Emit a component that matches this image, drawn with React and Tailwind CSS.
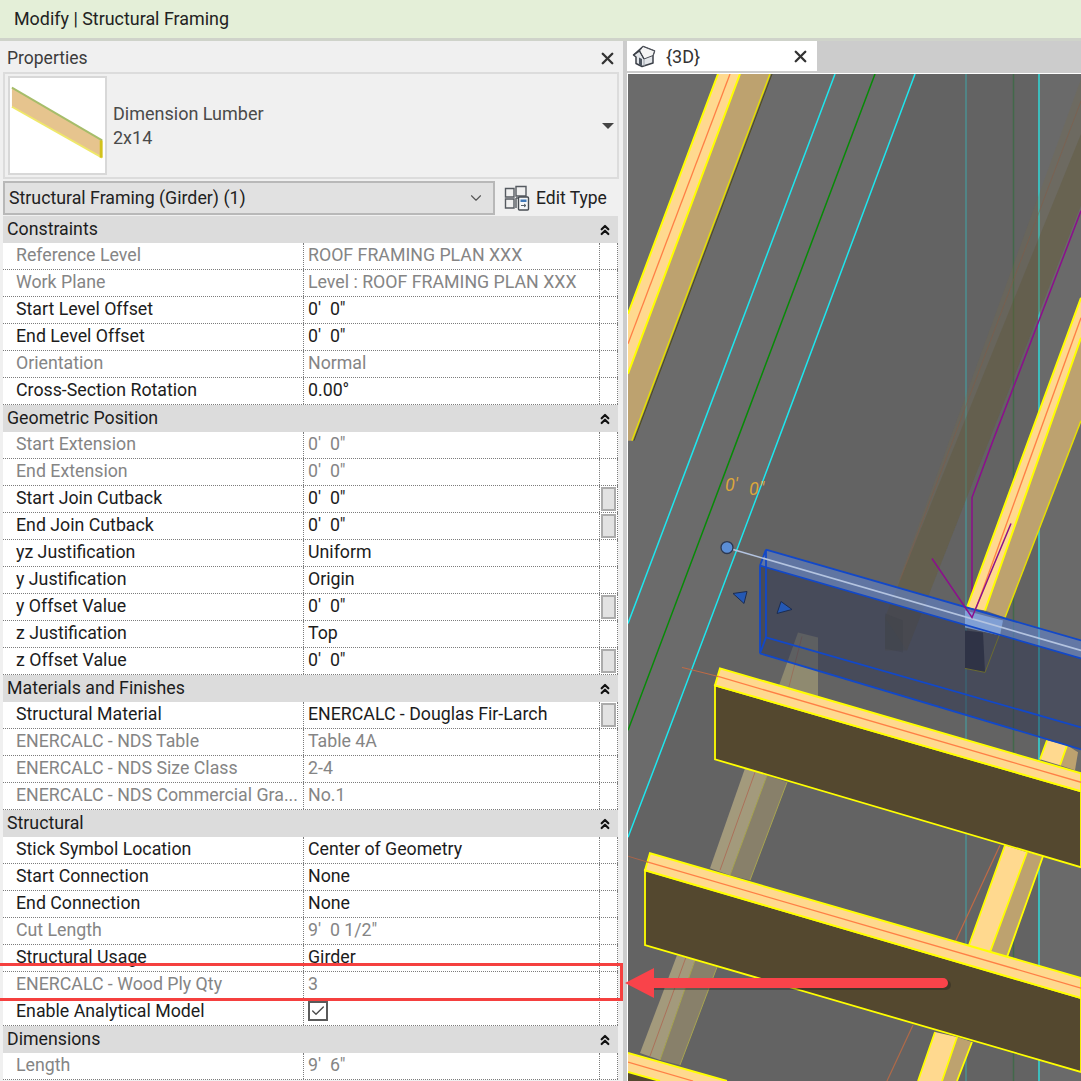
import React from 'react';
import { X, ChevronDown, ChevronsUp, Check } from 'lucide-react';

// property sections, in the order of the panel
const sections = [
  {
    title: 'Constraints',
    rows: [
      { label: 'Reference Level', value: 'ROOF FRAMING PLAN XXX', off: true },
      { label: 'Work Plane', value: 'Level : ROOF FRAMING PLAN XXX', off: true },
      { label: 'Start Level Offset', value: `0'  0"` },
      { label: 'End Level Offset', value: `0'  0"` },
      { label: 'Orientation', value: 'Normal', off: true },
      { label: 'Cross-Section Rotation', value: '0.00°' },
    ],
  },
  {
    title: 'Geometric Position',
    rows: [
      { label: 'Start Extension', value: `0'  0"`, off: true },
      { label: 'End Extension', value: `0'  0"`, off: true },
      { label: 'Start Join Cutback', value: `0'  0"`, btn: true },
      { label: 'End Join Cutback', value: `0'  0"`, btn: true },
      { label: 'yz Justification', value: 'Uniform' },
      { label: 'y Justification', value: 'Origin' },
      { label: 'y Offset Value', value: `0'  0"`, btn: true },
      { label: 'z Justification', value: 'Top' },
      { label: 'z Offset Value', value: `0'  0"`, btn: true },
    ],
  },
  {
    title: 'Materials and Finishes',
    rows: [
      { label: 'Structural Material', value: 'ENERCALC - Douglas Fir-Larch', btn: true },
      { label: 'ENERCALC - NDS Table', value: 'Table 4A', off: true },
      { label: 'ENERCALC - NDS Size Class', value: '2-4', off: true },
      { label: 'ENERCALC - NDS Commercial Gra...', value: 'No.1', off: true },
    ],
  },
  {
    title: 'Structural',
    rows: [
      { label: 'Stick Symbol Location', value: 'Center of Geometry' },
      { label: 'Start Connection', value: 'None' },
      { label: 'End Connection', value: 'None' },
      { label: 'Cut Length', value: `9'  0 1/2"`, off: true },
      { label: 'Structural Usage', value: 'Girder' },
      { label: 'ENERCALC - Wood Ply Qty', value: '3', off: true },
      { label: 'Enable Analytical Model', check: true },
    ],
  },
  {
    title: 'Dimensions',
    rows: [{ label: 'Length', value: `9'  6"`, off: true }],
  },
];

const PropRow = ({ row }) => (
  <div className={`flex h-[27px] items-center border-b border-dotted border-[#7c7c7c] bg-white text-[17.75px] ${row.off ? 'text-[#858585]' : 'text-[#1c1c1c]'}`}>
    <div className="flex h-full w-[301px] items-center overflow-hidden whitespace-nowrap border-r border-dotted border-[#7c7c7c] pb-[2px] pl-[13px]">
      {row.label}
    </div>
    <div className="flex h-full w-[296px] items-center whitespace-pre border-r border-dotted border-[#7c7c7c] pb-[2px] pl-[4px]">
      {row.check ? (
        <span className="flex h-[20px] w-[20px] items-center justify-center border-2 border-[#5a5a5a]">
          <Check size={16} strokeWidth={2} className="text-[#4a4a4a]" />
        </span>
      ) : (
        row.value
      )}
    </div>
    <div className="flex h-full w-[18px] items-center justify-center border-r border-dotted border-[#7c7c7c]">
      {row.btn && <span className="h-[24px] w-[15px] border-2 border-[#ababab] bg-[#e2e2e2]" />}
    </div>
  </div>
);

const Section = ({ section }) => (
  <div>
    <div className="flex h-[27px] items-center justify-between bg-[#dcdcdc] pl-[4px] pr-[5px] text-[17.75px] text-[#1c1c1c]">
      <span>{section.title}</span>
      <ChevronsUp size={16} strokeWidth={3.2} className="text-[#111]" />
    </div>
    {section.rows.map((row) => (
      <PropRow key={row.label} row={row} />
    ))}
  </div>
);

const HouseIcon = () => (
  <svg width="24" height="24" viewBox="0 0 24 24" className="shrink-0">
    <path d="M1.5 11 L11 2.5 L22.5 7 L21 11.5 L21 19 L10 22.5 L4 19.5 L4 13 Z" fill="#e3e6ea" stroke="#3c4048" strokeWidth="1.5" strokeLinejoin="round" />
    <path d="M11 2.5 L22.5 7 L21 11.5 L12 15 L7.5 7 Z" fill="#f4f4f4" stroke="#4c5058" strokeWidth="1" />
    <path d="M1.5 11 L7.5 7 L12 15" fill="none" stroke="#3c4048" strokeWidth="1.3" />
    <path d="M7 13.5 L10 15 L10 22 L7 20.5 Z" fill="#4d5560" />
    <path d="M12 15 V22" stroke="#9aa0a8" strokeWidth="1" />
  </svg>
);

const EditTypeIcon = () => (
  <svg width="26" height="26" viewBox="0 0 26 26" className="shrink-0">
    <path d="M1.5 3.5 H10 V12 H1.5 Z M12 1.5 H22 V11 H12 Z M1.5 14 H10 V23 H1.5 Z M12 13 H15 M12 13 V23" fill="none" stroke="#555a60" strokeWidth="1.4" />
    <rect x="14.5" y="12" width="10" height="13" rx="1" fill="#f4f6f8" stroke="#474c52" strokeWidth="1.4" />
    <rect x="16.5" y="14.5" width="6" height="2.5" fill="#3f78b8" />
    <path d="M17 20.5 H22 M20 19 L22 20.5 L20 22" fill="none" stroke="#55606a" strokeWidth="1" />
  </svg>
);

const Scene = () => (
  <svg viewBox="628 73 453 1008" preserveAspectRatio="none" className="h-full w-full">
    <rect x="628" y="73" width="453" height="1008" fill="#636363" />
    <polygon points="628,73 915,73 628,837" fill="#6b6b6b" />
    <polygon points="1039,73 1081,73 1081,1081 1039,1081" fill="#6a6a6a" />

    {/* vertical lines */}
    <path d="M966 73V1081" stroke="#4b8f91" strokeWidth="1.5" />
    <path d="M1013.5 73V1081" stroke="#42694a" strokeWidth="1.5" />
    <path d="M1039 73V1081" stroke="#2fd9d9" strokeWidth="1.5" />

    {/* ghost beam behind */}
    <polygon points="1081,78 1081,205 907,650 885,617" fill="#7b7040" fillOpacity="0.2" />
    <polygon points="1081,133 1081,205 907,650 885,650 885,617" fill="#5c5230" fillOpacity="0.3" />
    <path d="M1081 100 L900 580" stroke="#8a5a40" strokeOpacity="0.45" strokeWidth="1" fill="none" />

    {/* slanted lines */}
    <path d="M835 73 L697 440 L628 623" stroke="#1ee6ee" strokeWidth="1.5" fill="none" />
    <path d="M875 73 L737 440 L628 730" stroke="#078a07" strokeWidth="1.5" fill="none" />
    <path d="M915 73 L778 440 L665 740 L628 837" stroke="#1ee6ee" strokeWidth="1.5" fill="none" />
    <path d="M1081 210 L993 440 L972 497 V617" stroke="#8c0f8c" strokeWidth="1.5" fill="none" />

    {/* top left joist */}
    <polygon points="770,73 740,73 628,373 628,440 632,440" fill="#bda26f" />
    <polygon points="718,73 740,73 628,373 628,313" fill="#ffd98f" />
    <path d="M718 73 L628 313 M740 73 L628 373" stroke="#ffff00" strokeWidth="2" fill="none" />
    <path d="M770 73 L632 440" stroke="#e6e000" strokeWidth="1.5" fill="none" />
    <path d="M772 73 L634 440" stroke="#4f4a1c" strokeWidth="1" fill="none" />
    <path d="M730 73 L628 343" stroke="#ff7f45" strokeWidth="1.3" fill="none" />

    {/* right joist */}
    <polygon points="1081,420 1081,337 985,610 1005,617" fill="#bda26f" />
    <polygon points="1081,297 1081,337 985,610 967,607" fill="#ffd98f" />
    <path d="M1081 297 L967 607 M1081 337 L985 610" stroke="#ffff00" strokeWidth="2" fill="none" />
    <path d="M1081 420 L1005 617" stroke="#e6e000" strokeWidth="1.5" fill="none" />
    <path d="M1081 317 L976 608" stroke="#ff7f45" strokeWidth="1.3" fill="none" />

    {/* posts between the beams */}
    <polygon points="798,632 818,637 818,697 779,685" fill="#8f8a70" />
    <path d="M802 636 L788 690" stroke="#98705a" strokeWidth="1" fill="none" />
    <polygon points="745,768 767,775 730,875 710,868" fill="#a39a7c" />
    <polygon points="767,775 787,782 750,880 730,875" fill="#88806a" />
    <path d="M755 772 L720 870" stroke="#ab7059" strokeWidth="1" fill="none" />
    <path d="M767 775 L730 875 M787 782 L750 880" stroke="#a8a550" strokeWidth="1" fill="none" />
    <polygon points="677,955 695,960 660,1060 640,1053" fill="#a39a7c" />
    <polygon points="695,960 717,967 680,1065 660,1060" fill="#88806a" />
    <path d="M686 957 L650 1056" stroke="#ab7059" strokeWidth="1" fill="none" />
    <path d="M695 960 L660 1060 M717 967 L680 1065" stroke="#a8a550" strokeWidth="1" fill="none" />

    <polygon points="1005,845 1027,852 990,952 969,945" fill="#ffd98f" />
    <polygon points="1027,852 1043,856 1007,957 990,952" fill="#bda26f" />
    <path d="M1005 845 L969 945 M1027 852 L990 952 M1043 856 L1007 957" stroke="#ffff00" strokeWidth="1.8" fill="none" />
    <path d="M1000 845 L955 942" stroke="#c06a45" strokeWidth="1.2" fill="none" />

    <polygon points="935,1032 957,1037 942,1081 918,1081" fill="#ffd98f" />
    <polygon points="957,1037 972,1042 957,1081 942,1081" fill="#bda26f" />
    <path d="M935 1032 L918 1081 M957 1037 L942 1081 M972 1042 L957 1081" stroke="#ffff00" strokeWidth="1.8" fill="none" />
    <path d="M913 1025 L887 1081" stroke="#b06a48" strokeWidth="1.2" fill="none" />

    <polygon points="1047,740 1067,745 1060,765 1040,759" fill="#ffd98f" />
    <polygon points="1067,745 1078,752 1075,770 1060,765" fill="#bda26f" />
    <path d="M1047 740 L1040 759 M1067 745 L1060 765" stroke="#ffff00" strokeWidth="1.8" fill="none" />

    {/* beam 1 */}
    <polygon points="715,685 1081,791 1081,867 715,759" fill="#54482f" stroke="#ffff00" strokeWidth="1.8" />
    <polygon points="720,668 1081,773 1081,791 715,685" fill="#ffd98f" stroke="#ffff00" strokeWidth="2" />
    <path d="M718 676 L1081 782" stroke="#ff7f45" strokeWidth="1.3" fill="none" />
    <path d="M682 667 L718 676" stroke="#c06a45" strokeWidth="1" fill="none" />

    {/* beam 2 */}
    <polygon points="645,870 1081,998 1081,1072 645,945" fill="#54482f" stroke="#ffff00" strokeWidth="1.8" />
    <polygon points="650,853 1081,978 1081,998 645,870" fill="#ffd98f" stroke="#ffff00" strokeWidth="2" />
    <path d="M648 862 L1081 988" stroke="#ff7f45" strokeWidth="1.3" fill="none" />
    <path d="M628 856 L648 862" stroke="#a8644a" strokeWidth="1" fill="none" />

    {/* beam 3 */}
    <polygon points="628,1072 660,1081 628,1081" fill="#54482f" />
    <polygon points="628,1053 727,1081 660,1081 628,1072" fill="#ffd98f" />
    <path d="M628 1053 L727 1081 M628 1072 L660 1081" stroke="#ffff00" strokeWidth="2" fill="none" />
    <path d="M628 1062 L693 1081" stroke="#ff7f45" strokeWidth="1.3" fill="none" />

    {/* selected girder */}
    <polygon points="760,565 1081,658 1081,749 760,653" fill="#2c3452" fillOpacity="0.5" />
    <polygon points="885,613 903,620 903,652 885,648" fill="#3c3f48" fillOpacity="0.3" />
    <polygon points="965,630 983,632 985,672 965,668" fill="#2f3346" />
    <path d="M965 668 L985 672 L1003 625" stroke="#6b6b30" strokeWidth="1" fill="none" />
    <polygon points="766,549 1081,640 1081,658 760,565" fill="#5f80c4" fillOpacity="0.65" />
    <polygon points="965,610 1003,620 1000,635 965,627" fill="#8fb0ea" fillOpacity="0.7" />
    <path d="M766 549 L1081 640 M760 565 L1081 658 M760 653 L1081 749 M766 637 L1081 727 M760 565 V653 M766 549 V637 M766 549 L760 565 M766 637 L760 653" stroke="#1248c8" strokeWidth="1.8" fill="none" />
    <path d="M733 549 L1081 650" stroke="#b4c4e0" strokeWidth="1.6" fill="none" />
    <path d="M932 558 L972 617 L1011 523" stroke="#8c0f8c" strokeWidth="1.5" fill="none" />
    <circle cx="727" cy="547" r="6" fill="#5b8ed6" stroke="#2c3850" strokeWidth="1.3" />
    <polygon points="733,593 747,591 744,603" fill="#2458b4" stroke="#1c2c50" strokeWidth="1" />
    <polygon points="781,601 792,609 777,613" fill="#2458b4" stroke="#1c2c50" strokeWidth="1" />

    <text x="725" y="490" fill="#dba63c" fontSize="18" fontStyle="italic" fontFamily="Roboto, sans-serif">0'</text>
    <text x="749" y="494" fill="#dba63c" fontSize="18" fontStyle="italic" fontFamily="Roboto, sans-serif">0"</text>
  </svg>
);

export default function App() {
  return (
    <div className="relative h-[1081px] w-[1081px] overflow-hidden bg-[#f0f0f0] font-['Roboto','Noto_Sans',sans-serif]">
      <div className="flex h-[41px] items-center border-b-[3px] border-[#cfd3ca] bg-[#e4efd8] pl-[14px] text-[17.9px] text-[#222]">
        Modify | Structural Framing
      </div>

      <div className="flex h-[1040px]">
        {/* properties palette */}
        <div className="flex w-[623px] flex-col overflow-hidden pl-[3px] pt-[3px]">
          <div className="flex h-[28px] shrink-0 items-center justify-between pl-[4px] pr-[6px] text-[17.5px] text-[#3c3c3c]">
            <span>Properties</span>
            <X size={19} strokeWidth={3} className="text-[#333]" />
          </div>

          <div className="flex h-[107px] w-[616px] shrink-0 items-center border-2 border-[#dcdcdc] pl-[3px]">
            <div className="h-[99px] w-[99px] shrink-0 border-2 border-[#d8d8d8] bg-white">
              <svg viewBox="0 0 99 99" className="h-full w-full">
                <polygon points="2,10 96,65 96,83 2,30" fill="#e6c48e" />
                <path d="M2 10 L96 65" stroke="#a6bd6a" strokeWidth="2" fill="none" />
                <path d="M2 30 L96 83" stroke="#efe86a" strokeWidth="2" fill="none" />
                <path d="M95 65 V83" stroke="#d2c21c" strokeWidth="3" fill="none" />
              </svg>
            </div>
            <div className="ml-[6px] flex-1 text-[18px] leading-[24px] text-[#4a4a4a]">
              <div>Dimension Lumber</div>
              <div>2x14</div>
            </div>
            <div className="mr-[3px] h-0 w-0 border-x-[6px] border-t-[6px] border-x-transparent border-t-[#444]" />
          </div>

          <div className="mt-[2px] flex h-[34px] shrink-0 items-center">
            <div className="flex h-[34px] w-[492px] items-center justify-between border-2 border-[#b8b8b8] bg-[#e1e1e1] pl-[4px] pr-[8px] text-[17.75px] text-[#222]">
              <span>Structural Framing (Girder) (1)</span>
              <ChevronDown size={18} strokeWidth={1.5} className="text-[#555]" />
            </div>
            <div className="ml-[9px] flex items-center gap-[6px] text-[17.5px] text-[#222]">
              <EditTypeIcon />
              <span>Edit Type</span>
            </div>
          </div>

          <div className="mt-[1px] w-[615px]">
            {sections.map((section) => (
              <Section key={section.title} section={section} />
            ))}
          </div>
        </div>

        {/* view */}
        <div className="flex min-w-0 flex-1 flex-col border-l-[4px] border-[#cccccc] bg-white">
          <div className="flex h-[32px] shrink-0 items-start bg-[#cccccc]">
            <div className="flex h-[30px] w-[190px] items-center gap-[10px] bg-white pl-[5px] pr-[7px] text-[18px] text-[#333]">
              <HouseIcon />
              <span className="flex-1">{'{3D}'}</span>
              <X size={19} strokeWidth={3} className="text-[#333]" />
            </div>
          </div>
          <div className="min-h-0 flex-1 pl-px pt-[1px]">
            <Scene />
          </div>
        </div>
      </div>

      {/* callout over the palette */}
      <div className="absolute left-[-3px] top-[963px] h-[38px] w-[626px] border-[3px] border-[#f5403f]" />
      <svg viewBox="0 0 330 40" className="absolute left-[622px] top-[963px] h-[40px] w-[330px]">
        <path d="M30 15 H322 a4.5 4.5 0 0 1 0 10 H30 Z" fill="#1c1c1c" fillOpacity="0.35" transform="translate(2 2)" />
        <path d="M3 20 L32 5 V15 H321 a5 5 0 0 1 0 10 H32 V35 Z" fill="#f9434a" />
      </svg>
    </div>
  );
}
